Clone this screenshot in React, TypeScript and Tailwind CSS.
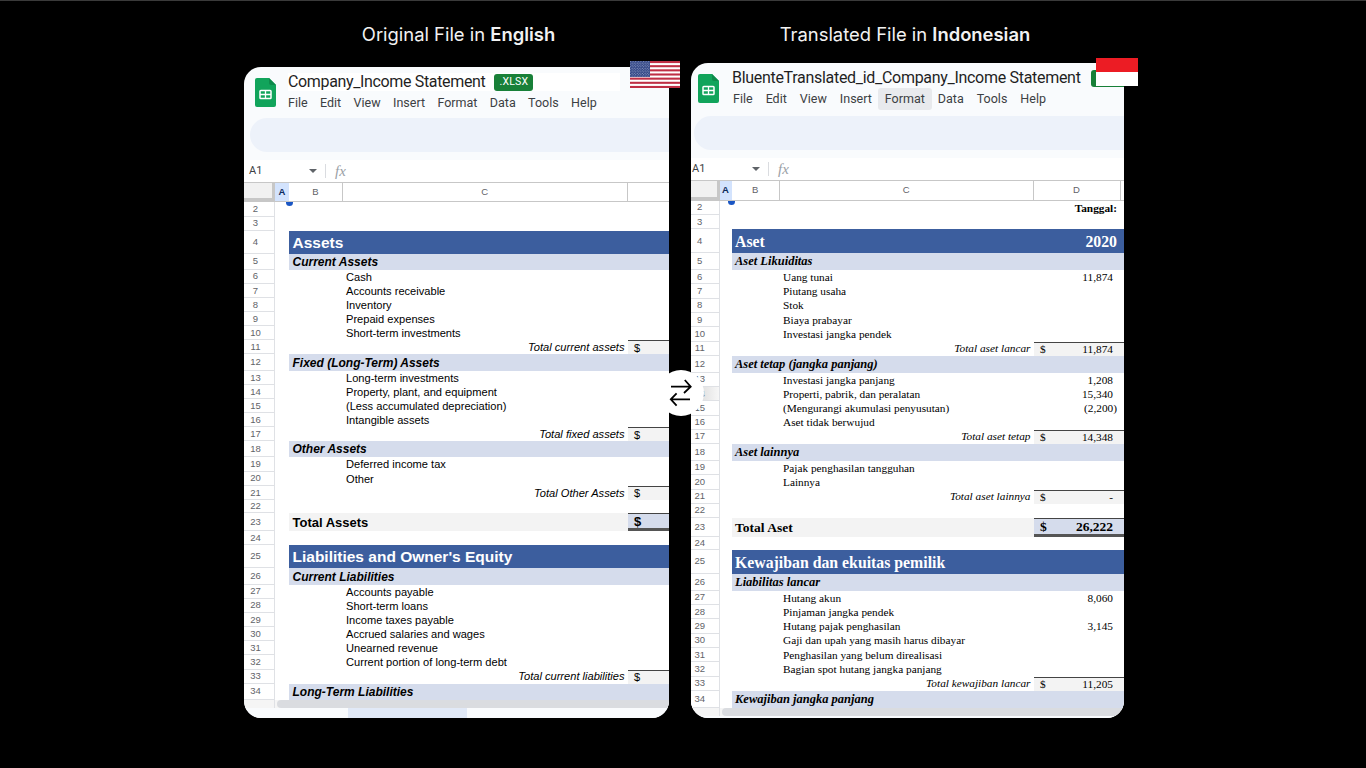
import React from 'react'

type Row = {
    n: number;
    h: string;
    kind?: 'blank' | 'title' | 'section' | 'item' | 'total' | 'grand' | 'date';
    label?: string;
    value?: string;
    shade?: boolean;
};

const leftRows: Row[] = [
    { n: 2, h: 'h-[15px]' },
    { n: 3, h: 'h-[14px]' },
    { n: 4, h: 'h-[23px]', kind: 'title', label: 'Assets' },
    { n: 5, h: 'h-[16px]', kind: 'section', label: 'Current Assets' },
    { n: 6, h: 'h-[14.08px]', kind: 'item', label: 'Cash' },
    { n: 7, h: 'h-[14.08px]', kind: 'item', label: 'Accounts receivable' },
    { n: 8, h: 'h-[14.08px]', kind: 'item', label: 'Inventory' },
    { n: 9, h: 'h-[14.08px]', kind: 'item', label: 'Prepaid expenses' },
    { n: 10, h: 'h-[14.08px]', kind: 'item', label: 'Short-term investments' },
    { n: 11, h: 'h-[14.08px]', kind: 'total', label: 'Total current assets' },
    { n: 12, h: 'h-[17px]', kind: 'section', label: 'Fixed (Long-Term) Assets' },
    { n: 13, h: 'h-[14px]', kind: 'item', label: 'Long-term investments' },
    { n: 14, h: 'h-[14px]', kind: 'item', label: 'Property, plant, and equipment' },
    { n: 15, h: 'h-[14px]', kind: 'item', label: '(Less accumulated depreciation)' },
    { n: 16, h: 'h-[14px]', kind: 'item', label: 'Intangible assets' },
    { n: 17, h: 'h-[14px]', kind: 'total', label: 'Total fixed assets' },
    { n: 18, h: 'h-[16px]', kind: 'section', label: 'Other Assets' },
    { n: 19, h: 'h-[14.33px]', kind: 'item', label: 'Deferred income tax' },
    { n: 20, h: 'h-[14.33px]', kind: 'item', label: 'Other' },
    { n: 21, h: 'h-[14.33px]', kind: 'total', label: 'Total Other Assets' },
    { n: 22, h: 'h-[13px]' },
    { n: 23, h: 'h-[18px]', kind: 'grand', label: 'Total Assets' },
    { n: 24, h: 'h-[13.5px]' },
    { n: 25, h: 'h-[23.5px]', kind: 'title', label: "Liabilities and Owner's Equity" },
    { n: 26, h: 'h-[16.5px]', kind: 'section', label: 'Current Liabilities' },
    { n: 27, h: 'h-[14.1px]', kind: 'item', label: 'Accounts payable' },
    { n: 28, h: 'h-[14.1px]', kind: 'item', label: 'Short-term loans' },
    { n: 29, h: 'h-[14.1px]', kind: 'item', label: 'Income taxes payable' },
    { n: 30, h: 'h-[14.1px]', kind: 'item', label: 'Accrued salaries and wages' },
    { n: 31, h: 'h-[14.1px]', kind: 'item', label: 'Unearned revenue' },
    { n: 32, h: 'h-[14.1px]', kind: 'item', label: 'Current portion of long-term debt' },
    { n: 33, h: 'h-[14.1px]', kind: 'total', label: 'Total current liabilities' },
    { n: 34, h: 'h-[16.8px]', kind: 'section', label: 'Long-Term Liabilities' },
]

const rightRows: Row[] = [
    { n: 2, h: 'h-[14px]', kind: 'date', value: 'Tanggal:' },
    { n: 3, h: 'h-[14.3px]' },
    { n: 4, h: 'h-[23.7px]', kind: 'title', label: 'Aset', value: '2020' },
    { n: 5, h: 'h-[17px]', kind: 'section', label: 'Aset Likuiditas' },
    { n: 6, h: 'h-[14.33px]', kind: 'item', label: 'Uang tunai', value: '11,874' },
    { n: 7, h: 'h-[14.33px]', kind: 'item', label: 'Piutang usaha' },
    { n: 8, h: 'h-[14.33px]', kind: 'item', label: 'Stok' },
    { n: 9, h: 'h-[14.33px]', kind: 'item', label: 'Biaya prabayar' },
    { n: 10, h: 'h-[14.33px]', kind: 'item', label: 'Investasi jangka pendek' },
    { n: 11, h: 'h-[14.33px]', kind: 'total', label: 'Total aset lancar', value: '11,874' },
    { n: 12, h: 'h-[17px]', kind: 'section', label: 'Aset tetap (jangka panjang)' },
    { n: 13, h: 'h-[14.2px]', kind: 'item', label: 'Investasi jangka panjang', value: '1,208' },
    { n: 14, h: 'h-[14.2px]', kind: 'item', label: 'Properti, pabrik, dan peralatan', value: '15,340', shade: true },
    { n: 15, h: 'h-[14.2px]', kind: 'item', label: '(Mengurangi akumulasi penyusutan)', value: '(2,200)' },
    { n: 16, h: 'h-[14.2px]', kind: 'item', label: 'Aset tidak berwujud' },
    { n: 17, h: 'h-[14.2px]', kind: 'total', label: 'Total aset tetap', value: '14,348' },
    { n: 18, h: 'h-[17px]', kind: 'section', label: 'Aset lainnya' },
    { n: 19, h: 'h-[14.33px]', kind: 'item', label: 'Pajak penghasilan tangguhan' },
    { n: 20, h: 'h-[14.33px]', kind: 'item', label: 'Lainnya' },
    { n: 21, h: 'h-[14.33px]', kind: 'total', label: 'Total aset lainnya', value: '-' },
    { n: 22, h: 'h-[14px]' },
    { n: 23, h: 'h-[19px]', kind: 'grand', label: 'Total Aset', value: '26,222' },
    { n: 24, h: 'h-[13px]' },
    { n: 25, h: 'h-[24px]', kind: 'title', label: 'Kewajiban dan ekuitas pemilik' },
    { n: 26, h: 'h-[17px]', kind: 'section', label: 'Liabilitas lancar' },
    { n: 27, h: 'h-[14.29px]', kind: 'item', label: 'Hutang akun', value: '8,060' },
    { n: 28, h: 'h-[14.29px]', kind: 'item', label: 'Pinjaman jangka pendek' },
    { n: 29, h: 'h-[14.29px]', kind: 'item', label: 'Hutang pajak penghasilan', value: '3,145' },
    { n: 30, h: 'h-[14.29px]', kind: 'item', label: 'Gaji dan upah yang masih harus dibayar' },
    { n: 31, h: 'h-[14.29px]', kind: 'item', label: 'Penghasilan yang belum direalisasi' },
    { n: 32, h: 'h-[14.29px]', kind: 'item', label: 'Bagian spot hutang jangka panjang' },
    { n: 33, h: 'h-[14.29px]', kind: 'total', label: 'Total kewajiban lancar', value: '11,205' },
    { n: 34, h: 'h-[17.5px]', kind: 'section', label: 'Kewajiban jangka panjang' },
]

const menu = ['File', 'Edit', 'View', 'Insert', 'Format', 'Data', 'Tools', 'Help']

// everything that differs between the two sheets
const leftTheme = {
    font: "font-['Liberation_Sans',Arial,sans-serif]",
    head: 'w-[31px]',
    num: 'pr-[7px]',
    colA: 'w-[14px]',
    colB: 'w-[54px]',
    colC: 'w-[284.5px]',
    colD: 'w-[41.5px]',
    title: 'text-[15.5px]',
    section: 'text-[12px]',
    item: 'text-[11.1px]',
    grand: 'text-[13px]',
    top: 'h-[35px] pt-[6px]',
    logo: 'ml-[10.5px] mt-[4.5px] mr-[12.5px]',
    titleBar: 'w-[332px] bg-white tracking-[-0.35px]',
    menuGap: 'gap-[12.4px]',
    search: 'ml-[6px] h-[34px] mt-[16px]',
    formula: 'mt-[8px] pl-[5px]',
    colHead: 'h-[20px]',
}

const rightTheme = {
    font: "font-['Liberation_Serif','Times_New_Roman',serif]",
    head: 'w-[28.5px]',
    num: 'pr-[10px]',
    colA: 'w-[12px]',
    colB: 'w-[48.5px]',
    colC: 'w-[253.5px]',
    colD: 'w-[90.5px]',
    title: 'text-[15.8px] pt-[1px]',
    section: 'text-[12.5px]',
    item: 'text-[11.3px]',
    grand: 'text-[13.5px] pt-[1px]',
    top: 'h-[36px] pt-[6px]',
    logo: 'ml-[7px] mt-[5px] mr-[13px]',
    titleBar: 'tracking-[-0.3px]',
    menuGap: 'gap-[13px] pl-[1px]',
    search: 'ml-[3px] h-[34px] mt-[17px]',
    formula: 'mt-[8px] pl-[1px]',
    colHead: 'h-[21px]',
}

type Theme = typeof leftTheme

const SheetsLogo = ({ className }: { className: string }) => (
    <svg viewBox="0 0 21 29" className={className}>
        <path d="M2 0H14L21 7V27a2 2 0 0 1-2 2H2a2 2 0 0 1-2-2V2a2 2 0 0 1 2-2Z" fill="#11a45b" />
        <path d="M14 0L21 7H16a2 2 0 0 1-2-2Z" fill="#0d8a4b" />
        <rect x="5" y="12.5" width="11" height="8" rx="0.8" fill="none" stroke="#fff" strokeWidth="1.5" />
        <path d="M5 16.5H16M10.5 12.5V20.5" stroke="#fff" strokeWidth="1.3" />
    </svg>
)

const UsFlag = () => (
    <svg viewBox="0 0 50 27" className="absolute left-[386px] top-[60px] h-[27px] w-[50px]">
        <defs>
            <pattern id="stars" width="2.6" height="2.6" patternUnits="userSpaceOnUse">
                <circle cx="0.65" cy="0.65" r="0.5" fill="#d8def0" />
                <circle cx="1.95" cy="1.95" r="0.5" fill="#d8def0" />
            </pattern>
        </defs>
        <rect width="50" height="27" fill="#fff" />
        {[0, 2, 4, 6, 8, 10, 12].map((i) => (
            <rect key={i} y={i * 2.077} width="50" height="2.077" fill="#bf2f45" />
        ))}
        <rect width="20" height="16" fill="#2a3f80" />
        <rect width="20" height="16" fill="url(#stars)" />
    </svg>
)

const Badge = () => (
    <span className="ml-[9px] flex h-[17px] w-[39px] shrink-0 items-center justify-center rounded-[3px] bg-[#188038] font-['Roboto',sans-serif] text-[10.5px] tracking-[0.2px] text-white">
        .XLSX
    </span>
)

const SheetRow = ({ row, t }: { row: Row; t: Theme }) => {
    const kind = row.kind ?? 'blank'
    return (
        <div className={`flex ${row.h} text-black`}>
            <div className={`${t.head} ${t.num} shrink-0 flex items-center justify-center border-b border-r border-[#dfe1e5] font-['Liberation_Sans',sans-serif] text-[9.5px] text-[#5f6368] ${row.shade ? 'bg-gradient-to-r from-[#d4d4d4] to-[#f7f7f7]' : 'bg-white'}`}>
                {row.n}
            </div>
            <div className={`${t.colA} shrink-0`} />

            {kind === 'title' && (
                <div className={`flex min-w-0 flex-1 items-center justify-between bg-[#3c5e9e] pl-[3.5px] pr-[7px] font-bold text-white ${t.title}`}>
                    <span>{row.label}</span>
                    <span>{row.value}</span>
                </div>
            )}

            {kind === 'section' && (
                <div className={`flex min-w-0 flex-1 items-center bg-[#d5dcec] pl-[3.5px] font-bold italic ${t.section}`}>
                    {row.label}
                </div>
            )}

            {kind === 'item' && (
                <>
                    <div className={`${t.colB} shrink-0`} />
                    <div className={`${t.colC} shrink-0 flex items-center pl-[3px] ${t.item}`}>{row.label}</div>
                    <div className={`flex min-w-0 flex-1 items-center justify-end ${row.value?.startsWith('(') ? 'pr-[7px]' : 'pr-[11px]'} ${t.item}`}>
                        {row.value}
                    </div>
                </>
            )}

            {kind === 'date' && (
                <>
                    <div className={`${t.colB} shrink-0`} />
                    <div className={`${t.colC} shrink-0`} />
                    <div className={`flex min-w-0 flex-1 items-center justify-end pr-[7px] font-bold ${t.item}`}>
                        {row.value}
                    </div>
                </>
            )}

            {kind === 'total' && (
                <>
                    <div className={`${t.colB} shrink-0`} />
                    <div className={`${t.colC} shrink-0 flex items-center justify-end pr-[3px] italic ${t.item}`}>{row.label}</div>
                    <div className={`flex min-w-0 flex-1 items-center justify-between border-t border-[#444] bg-[#f3f3f3] pl-[6.5px] pr-[11px] ${t.item}`}>
                        <span>$</span>
                        <span>{row.value}</span>
                    </div>
                </>
            )}

            {kind === 'grand' && (
                <>
                    <div className={`flex shrink-0 items-center bg-[#f3f3f3] pl-[3.5px] font-bold ${t.colB === 'w-[54px]' ? 'w-[338.5px]' : 'w-[302px]'} ${t.grand}`}>
                        {row.label}
                    </div>
                    <div className={`flex min-w-0 flex-1 items-center justify-between border-t border-b-[3px] border-t-[#444] border-b-[#555] bg-[#d5dcec] pl-[6.5px] pr-[11px] font-bold ${t.grand}`}>
                        <span>$</span>
                        <span>{row.value}</span>
                    </div>
                </>
            )}
        </div>
    )
}

const Sheet = ({ name, rows, t, hover, badge }: { name: string; rows: Row[]; t: Theme; hover?: string; badge?: boolean }) => (
    <div className="flex h-full flex-col overflow-hidden rounded-[17px] bg-[#f9fbfd]">
        <div className={`flex ${t.top}`}>
            <SheetsLogo className={`${t.logo} h-[29px] w-[21px] shrink-0`} />
            <div className="min-w-0 flex-1">
                <div className={`flex h-[18px] items-center whitespace-nowrap font-['Roboto',sans-serif] text-[16px] text-[#1f1f1f] ${t.titleBar}`}>
                    <span>{name}</span>
                    {badge ? <Badge /> : <span className="ml-[10px] h-[17px] w-[39px] shrink-0 rounded-[3px] bg-[#188038]" />}
                </div>
                <div className={`mt-[3px] flex h-[18px] items-center font-['Roboto',sans-serif] text-[12.5px] text-[#3c4043] ${t.menuGap}`}>
                    {menu.map((m) => (
                        <span key={m} className={m === hover ? '-mx-[7px] rounded-[3px] bg-[#e8eaed] px-[7px] py-[2px]' : ''}>
                            {m}
                        </span>
                    ))}
                </div>
            </div>
        </div>

        <div className={`${t.search} rounded-l-full bg-[#edf2fa]`} />

        <div className={`flex h-[22px] shrink-0 items-center ${t.formula} bg-white font-['Roboto',sans-serif] text-[11px] text-[#3c4043]`}>
            <span className="w-[60px]">A1</span>
            <span className="h-0 w-0 border-x-[4px] border-t-[4px] border-x-transparent border-t-[#5f6368]" />
            <span className="ml-[8px] h-[14px] w-px bg-[#dadce0]" />
            <span className="ml-[9px] font-['Liberation_Serif',serif] text-[15px] italic text-[#9aa0a6]">fx</span>
        </div>

        <div className={`flex ${t.colHead} shrink-0 border-y border-[#c7c7c7] bg-white font-['Liberation_Sans',sans-serif] text-[9.5px] text-[#5f6368]`}>
            <div className={`${t.head} shrink-0 border-b-[3px] border-r-[3px] border-[#c7c7c7] bg-[#f1f1f1]`} />
            <div className={`${t.colA} shrink-0 flex items-center justify-center bg-[#d3e3fd] font-bold text-[#0b2a5b]`}>A</div>
            <div className={`${t.colB} shrink-0 flex items-center justify-center border-r border-[#c7c7c7]`}>B</div>
            <div className={`${t.colC} shrink-0 flex items-center justify-center border-r border-[#c7c7c7]`}>C</div>
            {t.colD === 'w-[90.5px]' ? (
                <div className="flex w-[87px] shrink-0 items-center justify-center border-r border-[#c7c7c7]">D</div>
            ) : (
                <div className="flex-1" />
            )}
        </div>

        <div className={`relative shrink-0 bg-white ${t.font}`}>
            <span className={`absolute top-0 h-[3.5px] w-[7px] rounded-b-full bg-[#1a56c4] ${t.colA === 'w-[14px]' ? 'left-[41.5px]' : 'left-[37px]'}`} />
            {rows.map((r) => (
                <SheetRow key={r.n} row={r} t={t} />
            ))}
        </div>

        <div className="flex h-[8px] shrink-0 bg-[#f5f5f5]">
            <div className={`${t.head} shrink-0 border-r border-[#dfe1e5]`} />
            <div className="ml-[2px] flex-1 rounded-l-full bg-[#dadce0]" />
        </div>
        <div className="flex flex-1 bg-[#f9fbfd]">
            {badge && <div className="ml-[104px] w-[119px] bg-[#e1e9f7]" />}
        </div>
    </div>
)

const SwapIcon = () => (
    <svg viewBox="0 0 24 30" fill="none" stroke="#000" strokeWidth="1.8" className="h-[30px] w-[24px]">
        <path d="M2 8.7H21.5M15.8 2L21.7 8.7L15 15" />
        <path d="M21 21.3H2M7.6 15.3L1.8 21.3L7.6 27.7" />
    </svg>
)

export default function App() {
    return (
        <div className="relative flex h-[768px] w-[1366px] overflow-hidden border-t border-[#3a3a3a] bg-black pl-[244px]">
            <div className="relative w-[425px]">
                <h2 className="mt-[22px] flex h-[24px] items-center justify-center pl-[4px] font-['Inter',sans-serif] text-[18.4px] font-normal text-[#f2f2f2]">
                    Original File in&nbsp;<b className="font-semibold">English</b>
                </h2>
                <div className="mt-[20px] h-[651px]">
                    <Sheet name="Company_Income Statement" rows={leftRows} t={leftTheme} badge />
                </div>
                <UsFlag />
            </div>

            <div className="relative ml-[22px] w-[433px]">
                <h2 className="mt-[22px] flex h-[24px] items-center justify-center pr-[5px] font-['Inter',sans-serif] text-[18.4px] font-normal text-[#f2f2f2]">
                    Translated File in&nbsp;<b className="font-semibold">Indonesian</b>
                </h2>
                <div className="mt-[16px] h-[655px]">
                    <Sheet name="BluenteTranslated_id_Company_Income Statement" rows={rightRows} t={rightTheme} hover="Format" />
                </div>
                {/* flag hangs over the card corner */}
                <div className="absolute left-[405px] top-[57px] flex h-[28px] w-[42px] flex-col">
                    <div className="h-[14px] bg-[#ec1c24]" />
                    <div className="h-[14px] bg-white" />
                </div>
            </div>

            <div className="absolute left-[658px] top-[369px] flex h-[46px] w-[46px] items-center justify-center rounded-full bg-white">
                <SwapIcon />
            </div>
        </div>
    )
}
